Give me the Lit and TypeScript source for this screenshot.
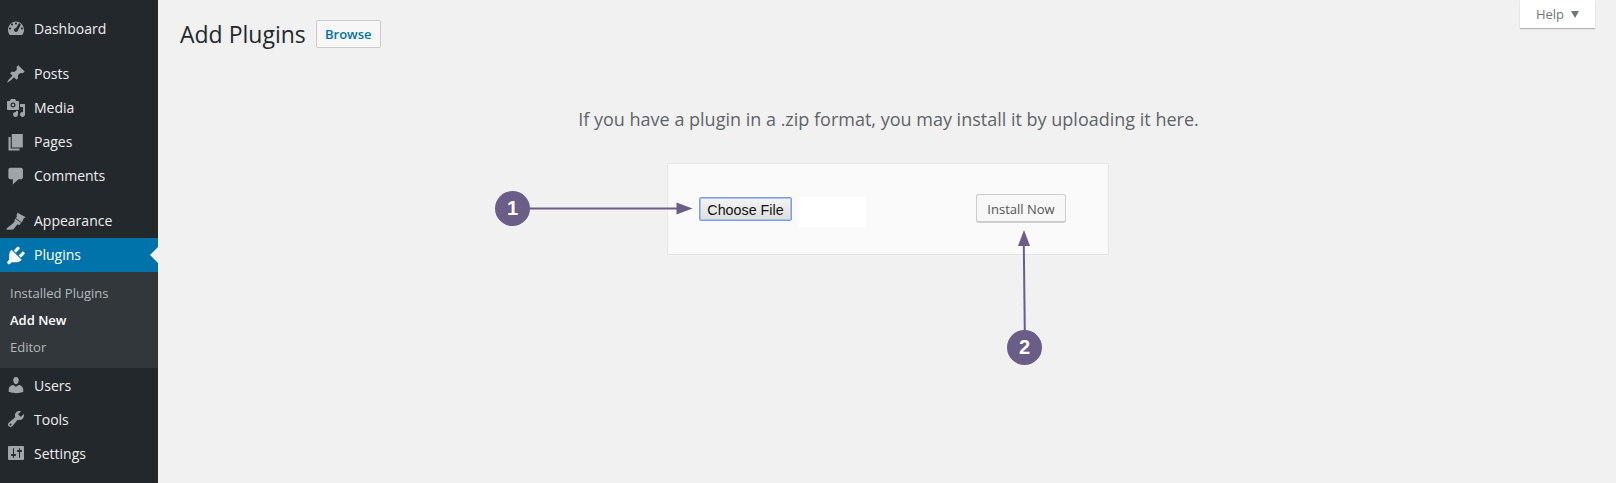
import { LitElement, html, css, svg } from "lit";
import { customElement } from "lit/decorators.js";

const icons: Record<string, unknown> = {
  dashboard: svg`<path fill-rule="evenodd" d="M3.76 16h12.48c1.100-1.430 1.760-3.210 1.760-5.150 0-4.640-3.580-8.420-8-8.420s-8 3.780-8 8.420c0 1.940.66 3.720 1.760 5.150zM10 3.430c.55 0 1 .45 1 1s-.45 1-1 1-1-.45-1-1 .45-1 1-1zM6 4.430c.55 0 1 .45 1 1s-.45 1-1 1-1-.45-1-1 .45-1 1-1zm8.860 1.440L12 11c0 1.100-.9 2-2 2s-2-.9-2-2 .9-2 2-2c.04 0 .07.02.11.02l3-5zM4 8.430c.55 0 1 .45 1 1s-.45 1-1 1-1-.45-1-1 .45-1 1-1zm12 0c.55 0 1 .45 1 1s-.45 1-1 1-1-.45-1-1 .45-1 1-1z"/>`,
  posts: svg`<path d="M10.440 3.020l1.820-1.820 6.360 6.350-1.830 1.820c-1.050-.68-2.480-.57-3.410.36l-.75.75c-.92.93-1.040 2.350-.35 3.410l-1.830 1.820-2.410-2.410-2.800 2.790c-.42.42-3.380 2.710-3.800 2.290s1.860-3.390 2.280-3.810l2.790-2.790L4.100 9.360l1.830-1.820c1.050.69 2.480.57 3.400-.36l.75-.75c.93-.92 1.050-2.350.36-3.410z"/>`,
  media: svg`<path fill-rule="evenodd" d="M13 11V4c0-.55-.45-1-1-1h-1.670L9 1H5L3.670 3H2c-.55 0-1 .45-1 1v7c0 .55.45 1 1 1h10c.55 0 1-.45 1-1zM7 4.500c1.380 0 2.500 1.120 2.500 2.500S8.380 9.500 7 9.500 4.500 8.380 4.500 7 5.620 4.500 7 4.500z"/><circle cx="7" cy="7" r="1.300"/><path d="M14 6h5v10.500c0 1.380-1.120 2.500-2.500 2.500S14 17.880 14 16.500s1.120-2.500 2.500-2.500c.17 0 .34.02.5.05V9h-3V6zm-4 8.050V13h2v3.500c0 1.380-1.120 2.500-2.500 2.500S7 17.880 7 16.500 8.120 14 9.500 14c.17 0 .34.02.5.05z"/>`,
  pages: svg`<path transform="translate(-.8 -.2) scale(1.1 1.04)" d="M6 15V2h10v13H6zm-1 1h8v2H3V5h2v11z"/>`,
  comments: svg`<path transform="translate(-1 -.3) scale(1.12 1.04)" d="M5 2h9c1.100 0 2 .9 2 2v7c0 1.100-.9 2-2 2h-2l-5 5v-5H5c-1.100 0-2-.9-2-2V4c0-1.100.9-2 2-2z"/>`,
  appearance: svg`<path d="M11.500 1.800l8.300 4.400-2 1-2 4.300-6.300-4.500 1.400-.9-.3-2.400z"/><path d="M9 7.500l6 4.300-1.300 2.100-2.500-.4-3.800 5-6.600.3-.2-1.400 5.900-4.700 2.100-2.100.1-1.800z"/>`,
  plugins: svg`<path transform="translate(-1.400 -1) scale(1.14)" d="M13.110 4.360L9.870 7.600 8 5.730l3.240-3.240c.35-.34 1.050-.2 1.560.32.52.51.66 1.210.31 1.550zm-8 1.770l.91-1.120 9.010 9.010-1.190.84c-.71.71-2.630 1.160-3.820 1.160H6.140L4.900 17.260c-.59.59-1.540.59-2.120 0-.59-.58-.59-1.530 0-2.120l1.240-1.240v-3.880c0-1.130.4-3.050 1.090-3.890zm7.260 3.970l3.240-3.240c.34-.35 1.040-.21 1.550.31.52.51.66 1.210.31 1.560l-3.240 3.250z"/>`,
  users: svg`<path d="M10 9.250c-2.270 0-2.730-3.440-2.730-3.440C7 4.020 7.820 2 9.970 2c2.160 0 2.980 2.020 2.710 3.810 0 0-.41 3.440-2.680 3.440zm0 2.570L12.720 10c2.390 0 4.520 2.330 4.520 4.530v2.490s-3.650 1.130-7.240 1.130c-3.650 0-7.240-1.130-7.240-1.130v-2.490c0-2.250 1.940-4.480 4.470-4.480z"/>`,
  tools: svg`<path fill-rule="evenodd" d="M16.680 9.770c-1.340 1.340-3.300 1.670-4.950.99l-5.410 6.520c-.99.99-2.590.99-3.580 0s-.99-2.590 0-3.570l6.520-5.420c-.68-1.650-.35-3.610.99-4.950 1.280-1.280 3.120-1.620 4.720-1.060l-2.890 2.890 2.820 2.820 2.860-2.870c.53 1.580.18 3.390-1.080 4.650zM3.810 16.210c.4.39 1.030.39 1.420 0 .4-.4.4-1.030 0-1.430-.39-.39-1.020-.39-1.420 0-.4.4-.4 1.030 0 1.430z"/>`,
  settings: svg`<path fill-rule="evenodd" d="M18 16V4c0-.55-.45-1-1-1H3c-.55 0-1 .45-1 1v12c0 .55.45 1 1 1h14c.55 0 1-.45 1-1zM8 11h1c.55 0 1 .45 1 1s-.45 1-1 1H8v1.500c0 .28-.22.5-.5.5s-.5-.22-.5-.5V13H6c-.55 0-1-.45-1-1s.45-1 1-1h1V5.500c0-.28.22-.5.5-.5s.5.22.5.5V11zm5-2h-1c-.55 0-1-.45-1-1s.45-1 1-1h1V5.500c0-.28.22-.5.5-.5s.5.22.5.5V7h1c.55 0 1 .45 1 1s-.45 1-1 1h-1v5.500c0 .28-.22.5-.5.5s-.5-.22-.5-.5V9z"/>`,
};

const main1 = [["dashboard", "Dashboard"]];
const main2 = [
  ["posts", "Posts"],
  ["media", "Media"],
  ["pages", "Pages"],
  ["comments", "Comments"],
];
const main3 = [["appearance", "Appearance"]];
const main4 = [
  ["users", "Users"],
  ["tools", "Tools"],
  ["settings", "Settings"],
];

@customElement("app-root")
export class AppRoot extends LitElement {
  static styles = css`
    :host {
      display: block;
      width: 1616px;
      height: 483px;
      overflow: hidden;
      background: #f1f1f1;
      font-family: "Open Sans", sans-serif;
      position: relative;
    }
    .page {
      display: flex;
      height: 483px;
    }
    .side {
      width: 158px;
      flex: none;
      background: #23282d;
      padding-top: 12px;
      box-sizing: border-box;
    }
    .group {
      margin-bottom: 11px;
    }
    .item {
      height: 34px;
      display: flex;
      align-items: center;
      color: #eee;
      font-size: 14px;
      position: relative;
    }
    .item span {
      padding-bottom: 2px;
    }
    .low .item span {
      padding-bottom: 0;
    }
    .item svg {
      width: 20px;
      height: 20px;
      margin-left: 6px;
      margin-right: 8px;
      fill: #a0a5aa;
      flex: none;
    }
    .active {
      background: #0073aa;
      color: #fff;
    }
    .active svg {
      fill: #fff;
    }
    .active::after {
      content: "";
      position: absolute;
      right: 0;
      top: 9px;
      border: 8px solid transparent;
      border-right-color: #f1f1f1;
      border-left-width: 0;
    }
    .sub {
      background: #32373c;
      height: 96px;
      padding: 8px 0 0;
      box-sizing: border-box;
      display: flex;
      flex-direction: column;
    }
    .sub div {
      height: 27px;
      line-height: 27px;
      padding-left: 10px;
      font-size: 13px;
      color: #b4b9be;
    }
    .sub .cur {
      color: #fff;
      font-weight: 600;
    }
    .main {
      flex: 1;
      padding-left: 22px;
      position: relative;
    }
    .head {
      display: flex;
      align-items: center;
      height: 28px;
      margin-top: 20px;
    }
    h1 {
      margin: 0 10px 0 0;
      font-size: 23px;
      font-weight: 400;
      color: #23282d;
      line-height: 28px;
    }
    .browse {
      width: 65px;
      height: 28px;
      box-sizing: border-box;
      border: 1px solid #ccc;
      border-radius: 2px;
      background: #f7f7f7;
      color: #0073aa;
      font-size: 13px;
      font-weight: 600;
      display: flex;
      align-items: center;
      justify-content: center;
    }
    .help-tab {
      position: absolute;
      right: 21px;
      top: 0;
      width: 75px;
      height: 28px;
      background: #fff;
      box-shadow: 0 1px 1px rgba(0, 0, 0, 0.25);
      color: #72777c;
      font-size: 13px;
      display: flex;
      align-items: center;
      justify-content: center;
      gap: 7px;
    }
    .help-tab i {
      border: 4.5px solid transparent;
      border-top: 7px solid #72777c;
      border-bottom-width: 0;
    }
    .intro {
      font-size: 18px;
      color: #5f6468;
      text-align: center;
      margin: 0;
      line-height: 26px;
      position: absolute;
      top: 106px;
      left: 420px;
      width: 621px;
    }
    .upload-wrap {
      margin: 115px 0 0 487px;
      width: 442px;
      height: 92px;
      box-sizing: border-box;
      background: #fafafa;
      border: 1px solid #e5e5e5;
      display: flex;
      align-items: flex-start;
      padding: 33px 0 0 31px;
    }
    .file {
      width: 93px;
      height: 24px;
      box-sizing: border-box;
      padding-top: 1px;
      border: 1px solid #7b9ede;
      border-radius: 2px;
      background: linear-gradient(#f4f4f4, #dedede);
      box-shadow: inset 0 0 0 1px #a9c2ea;
      color: #111;
      font-family: "Liberation Sans", Arial, sans-serif;
      font-size: 14.3px;
      display: flex;
      align-items: center;
      justify-content: center;
    }
    .blank {
      width: 68px;
      height: 30px;
      background: #fff;
      margin-left: 6px;
    }
    .install {
      width: 90px;
      height: 29px;
      box-sizing: border-box;
      padding-top: 1px;
      margin: -3px 0 0 110px;
      border: 1px solid #ccc;
      border-bottom-width: 2px;
      border-radius: 3px;
      background: #f7f7f7;
      color: #555;
      font-size: 13px;
      display: flex;
      align-items: center;
      justify-content: center;
    }
    .notes {
      position: absolute;
      left: 0;
      top: 0;
      width: 1616px;
      height: 483px;
      pointer-events: none;
    }
    .badge {
      position: absolute;
      width: 35px;
      height: 35px;
      border-radius: 50%;
      background: #6a5d87;
      color: #fff;
      font-family: "Liberation Sans", Arial, sans-serif;
      font-weight: 700;
      font-size: 20px;
      display: flex;
      align-items: center;
      justify-content: center;
    }
    .b1 {
      left: 495px;
      top: 191px;
    }
    .b2 {
      left: 1007px;
      top: 330px;
    }
  `;

  private row(list: string[][]) {
    return list.map(
      ([ic, label]) => html`<div class="item">
        <svg viewBox="0 0 20 20">${icons[ic]}</svg><span>${label}</span>
      </div>`
    );
  }

  render() {
    return html`
      <div class="page">
        <nav class="side">
          <div class="group">${this.row(main1)}</div>
          <div class="group">${this.row(main2)}</div>
          ${this.row(main3)}
          <div class="item active">
            <svg viewBox="0 0 20 20">${icons.plugins}</svg><span>Plugins</span>
          </div>
          <div class="sub">
            <div>Installed Plugins</div>
            <div class="cur">Add New</div>
            <div>Editor</div>
          </div>
          <div class="low">${this.row(main4)}</div>
        </nav>
        <main class="main">
          <div class="head">
            <h1>Add Plugins</h1>
            <div class="browse">Browse</div>
          </div>
          <p class="intro">If you have a plugin in a .zip format, you may install it by uploading it here.</p>
          <div class="upload-wrap">
            <div class="file">Choose File</div>
            <div class="blank"></div>
            <div class="install">Install Now</div>
          </div>
          <div class="help-tab">Help <i></i></div>
        </main>
      </div>
      <div class="notes">
        <svg width="1616" height="483" viewBox="0 0 1616 483">
          <path d="M528 208.500H680" stroke="#6a5d87" stroke-width="2" fill="none" />
          <path d="M676.500 202.500L692.500 208.500L676.500 214.500z" fill="#6a5d87" />
          <path d="M1023.800 245L1024.800 332" stroke="#6a5d87" stroke-width="2" fill="none" />
          <path d="M1024 230L1030 246H1018z" fill="#6a5d87" />
        </svg>
        <div class="badge b1">1</div>
        <div class="badge b2">2</div>
      </div>
    `;
  }
}
